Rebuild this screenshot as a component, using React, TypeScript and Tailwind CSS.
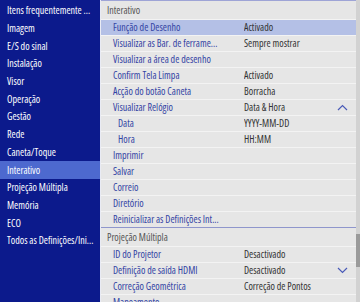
const menu = [
  'Itens frequentemente ...',
  'Imagem',
  'E/S do sinal',
  'Instalação',
  'Visor',
  'Operação',
  'Gestão',
  'Rede',
  'Caneta/Toque',
  'Interativo',
  'Projeção Múltipla',
  'Memória',
  'ECO',
  'Todos as Definições/Ini...',
];

type Row = { label: string; value?: string; sub?: boolean; active?: boolean; icon?: 'up' | 'down'; wide?: boolean };

const interactive: Row[] = [
  { label: 'Função de Desenho', value: 'Activado', active: true },
  { label: 'Visualizar as Bar. de ferrame...', value: 'Sempre mostrar' },
  { label: 'Visualizar a área de desenho', wide: true },
  { label: 'Confirm Tela Limpa', value: 'Activado' },
  { label: 'Acção do botão Caneta', value: 'Borracha' },
  { label: 'Visualizar Relógio', value: 'Data & Hora', icon: 'up' },
  { label: 'Data', value: 'YYYY-MM-DD', sub: true },
  { label: 'Hora', value: 'HH:MM', sub: true },
  { label: 'Imprimir' },
  { label: 'Salvar' },
  { label: 'Correio' },
  { label: 'Diretório' },
  { label: 'Reinicializar as Definições Int...', wide: true },
];

const multi: Row[] = [
  { label: 'ID do Projetor', value: 'Desactivado' },
  { label: 'Definição de saída HDMI', value: 'Desactivado', icon: 'down' },
  { label: 'Correção Geométrica', value: 'Correção de Pontos' },
  { label: 'Mapeamento' },
];

function Chevron({ dir }: { dir: 'up' | 'down' }) {
  return (
    <svg width="11" height="7" viewBox="0 0 11 7" className="text-[#4a5bb8]">
      <path
        d={dir === 'up' ? 'M1 6 L5.5 1.5 L10 6' : 'M1 1 L5.5 5.5 L10 1'}
        fill="none"
        stroke="currentColor"
        strokeWidth="1.2"
      />
    </svg>
  );
}

function SettingRow({ row, last }: { row: Row; last?: boolean }) {
  return (
    <div
      className={`flex h-4 shrink-0 items-center whitespace-nowrap ${last ? 'border-b border-[#8f96cc]' : 'border-b border-[#f3f3f3]'} ${row.active ? 'bg-[#b4c0e6]' : ''}`}
    >
      <div
        className={`${row.wide ? 'flex-1' : 'w-[143px] shrink-0'} overflow-hidden text-[#3344a4] ${row.sub ? 'pl-[17px]' : 'pl-3'}`}
      >
        {row.label}
      </div>
      {!row.wide && <div className="flex-1 overflow-hidden text-[#333]">{row.value}</div>}
      {row.icon && (
        <div className="pr-[8px]">
          <Chevron dir={row.icon} />
        </div>
      )}
    </div>
  );
}

export default function App() {
  return (
    <div className="flex h-[302px] w-[360px] overflow-hidden bg-[#0c1a8c] font-['Open_Sans','Noto_Sans',sans-serif] text-[10px] [font-stretch:87%]">
      <div className="flex w-[100px] shrink-0 flex-col pt-[2px]">
        {menu.map((m) => (
          <div
            key={m}
            className={`flex h-[17.7px] shrink-0 items-center overflow-hidden whitespace-nowrap pl-[7px] text-white ${m === 'Interativo' ? 'bg-[#4d69cf]' : ''}`}
          >
            {m}
          </div>
        ))}
      </div>
      <div className="flex flex-1 border-l border-[#e9ebf4] bg-[#e6e6e6]">
        <div className="flex flex-1 flex-col border-t border-[#9ea4d6]">
          <div className="flex h-[19px] shrink-0 items-center border-b border-[#f3f3f3] pl-[6px] text-[#555]">
            Interativo
          </div>
          {interactive.map((r, i) => (
            <SettingRow key={r.label} row={r} last={i === interactive.length - 1} />
          ))}
          <div className="flex h-[19px] shrink-0 items-center border-b border-[#f3f3f3] pl-[6px] text-[#555]">
            Projeção Múltipla
          </div>
          {multi.map((r) => (
            <SettingRow key={r.label} row={r} />
          ))}
        </div>
        <div className="flex w-1 flex-col bg-[#d2d2d2]">
          <div className="h-[234px]" />
          <div className="h-[33px] bg-[#9a9a9a]" />
        </div>
      </div>
    </div>
  );
}
